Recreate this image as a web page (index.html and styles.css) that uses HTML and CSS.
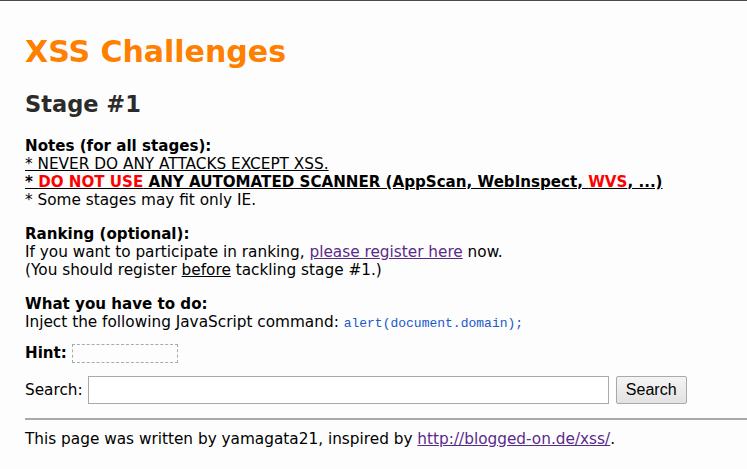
FILE: index.html
```html
<!DOCTYPE html>
<html>
<head>
<meta charset="utf-8">
<title>XSS Challenges (by yamagata21) - Stage #1</title>
<link rel="stylesheet" href="styles.css">
</head>
<body>
<h1 class="title">XSS Challenges</h1>
<h2 class="stage">Stage #1</h2>

<div class="block first">
<b>Notes (for all stages):</b><br>
<span class="u">* NEVER DO ANY ATTACKS EXCEPT XSS.</span><br>
<b class="u">* <span class="red">DO NOT USE</span> ANY AUTOMATED SCANNER (AppScan, WebInspect, <span class="red">WVS</span>, ...)</b><br>
* Some stages may fit only IE.
</div>

<div class="block">
<b>Ranking (optional):</b><br>
If you want to participate in ranking, <a class="visited" href="#">please register here</a> now.<br>
(You should register <span class="u">before</span> tackling stage #1.)
</div>

<div class="block">
<b>What you have to do:</b><br>
Inject the following JavaScript command: <code class="cmd">alert(document.domain);</code>
</div>

<div class="hint-row"><b>Hint:</b> <span class="hint-box"></span></div>

<form class="search-row">
<label class="search-label">Search:</label>
<input class="search-input" type="text">
<button class="search-btn" type="button">Search</button>
</form>

<hr class="rule">
<div class="footer">This page was written by yamagata21, inspired by <a class="visited" href="#">http://blogged-on.de/xss/</a>.</div>
</body>
</html>
```
FILE: styles.css
```css
html {
  border-top: 1px solid #4d4d4d;
  background: #fdfdfd;
}
body {
  margin: 0;
  padding: 0 0 0 25px;
  font-family: "DejaVu Sans", Verdana, sans-serif;
  font-size: 15.3px;
  line-height: 18px;
  color: #000;
}
b { font-size: 15.1px; }
.title {
  color: #ff7f00;
  font-size: 30px;
  line-height: 36px;
  margin: 33px 0 0 0;
}
.stage {
  color: #2b2b2b;
  font-size: 22.5px;
  line-height: 28px;
  margin: 20px 0 0 0;
}
.block {
  margin-top: 16px;
}
.block.first {
  margin-top: 19px;
}
.u { text-decoration: underline; }
.red { color: #ff0000; }
a.visited { color: #5a2a8a; }
.cmd {
  font-family: "Liberation Mono", monospace;
  font-size: 13px;
  color: #1c58c9;
}
.hint-row {
  margin-top: 10px;
  display: flex;
  align-items: center;
  gap: 5px;
  height: 20px;
}
.hint-box {
  display: inline-block;
  width: 104px;
  height: 17px;
  border: 1px dashed #aaa;
}
.search-row {
  margin: 13px 0 0 0;
  display: flex;
  align-items: center;
}
.search-label { margin-right: 5px; }
.search-input {
  width: 519px;
  height: 26px;
  box-sizing: content-box;
  padding: 0;
  border: 1px solid #a9a9a9;
  margin: 0 7px 0 0;
  background: #fff;
}
.search-btn {
  width: 71px;
  height: 28px;
  font-family: "Liberation Sans", Arial, sans-serif;
  font-size: 16px;
  border: 1px solid #a9a9a9;
  border-radius: 2px;
  background: linear-gradient(#f4f4f4, #e2e2e2);
  color: #000;
  padding: 0;
}
.rule {
  margin: 14px 0 0 0;
  border: 0;
  border-top: 2px solid #a9a9a9;
  height: 0;
}
.footer {
  margin-top: 10px;
}
```
